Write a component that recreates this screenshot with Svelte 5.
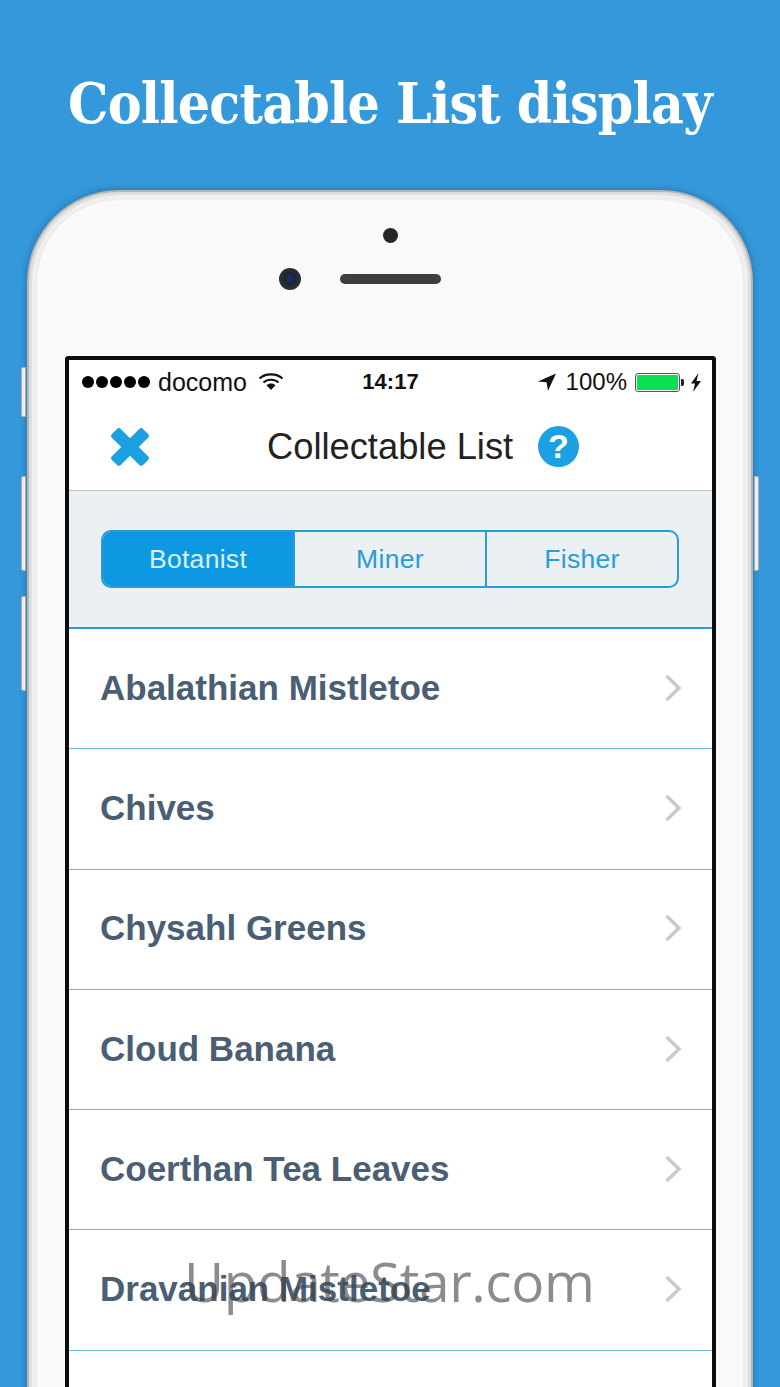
<script lang="ts">
  const tabs = ['Botanist', 'Miner', 'Fisher'];
  const items = [
    'Abalathian Mistletoe',
    'Chives',
    'Chysahl Greens',
    'Cloud Banana',
    'Coerthan Tea Leaves',
    'Dravanian Mistletoe',
    ''
  ];
  let active = 'Botanist';
</script>

<div class="page">
  <h1>Collectable List display</h1>

  <div class="phone">
    <span class="side-btn mute"></span>
    <span class="side-btn vol-up"></span>
    <span class="side-btn vol-down"></span>
    <span class="side-btn power"></span>

    <div class="bezel">
      <span class="sensor"></span>
      <div class="cam-row">
        <span class="camera"></span>
        <span class="speaker"></span>
      </div>
    </div>

    <div class="screen">
      <div class="status">
        <div class="status-left">
          <span class="dots"><i></i><i></i><i></i><i></i><i></i></span>
          <span class="carrier">docomo</span>
          <svg class="wifi" width="26" height="20" viewBox="0 0 26 20">
            <path d="M1.5 6.5C7.5 1 18.5 1 24.5 6.5" fill="none" stroke="#111" stroke-width="2.2"/>
            <path d="M5.5 10.5C9.5 6.8 16.5 6.8 20.5 10.5" fill="none" stroke="#111" stroke-width="2.2"/>
            <path d="M8.5 13.2L13 18l4.5-4.8C15 11 11 11 8.5 13.2z" fill="#111"/>
          </svg>
        </div>
        <span class="clock">14:17</span>
        <div class="status-right">
          <svg width="20" height="20" viewBox="0 0 20 20">
            <path d="M19 1.5L1 9.5l8.5.8 1.5 8.5z" fill="#111"/>
          </svg>
          <span class="pct">100%</span>
          <span class="battery"><b></b></span>
          <span class="nub"></span>
          <svg class="bolt" width="12" height="19" viewBox="0 0 12 19">
            <path d="M8.5 0L1 10.5h4L3 19l8-11H6.5z" fill="#111"/>
          </svg>
        </div>
      </div>

      <div class="nav">
        <svg class="close" width="40" height="40" viewBox="0 0 40 40">
          <g fill="#1ba1e2" transform="rotate(45 20 20)">
            <rect x="-2" y="13.75" width="44" height="12.5" rx="3"/>
            <rect x="13.75" y="-2" width="12.5" height="44" rx="3"/>
          </g>
        </svg>
        <span class="nav-title">Collectable List</span>
        <span class="help">?</span>
      </div>

      <div class="seg-wrap">
        <div class="seg">
          {#each tabs as tab}
            <button class:on={tab === active} on:click={() => (active = tab)}>{tab}</button>
          {/each}
        </div>
      </div>

      <ul>
        {#each items as item}
          <li>
            <span>{item}</span>
            <svg width="18" height="28" viewBox="0 0 18 28">
              <path d="M2.5 2L15 14 2.5 26" fill="none" stroke="#c9c9c9" stroke-width="3.4"/>
            </svg>
          </li>
        {/each}
      </ul>
    </div>
  </div>

  <div class="watermark">UpdateStar.com</div>
</div>

<style>
  :global(body) {
    margin: 0;
    background: #3498db;
  }

  .page {
    position: relative;
    width: 780px;
    height: 1387px;
    overflow: hidden;
    background: #3498db;
  }

  h1 {
    margin: 0;
    height: 190px;
    padding-top: 66px;
    box-sizing: border-box;
    text-align: center;
    color: #fff;
    font: 700 56.5px/74px "DejaVu Serif Condensed", "DejaVu Serif", serif;
    font-stretch: condensed;
    letter-spacing: -0.8px;
    white-space: nowrap;
  }

  .phone {
    position: relative;
    margin: 0 27px;
    height: 1300px;
    box-sizing: border-box;
    padding: 0 35px 0 36px;
    background: #f9f9f9;
    border-radius: 92px 92px 0 0;
    border: 2px solid #b4b5b7;
    border-bottom: 0;
    box-shadow:
      inset 0 0 2px 3px #dcdcdc,
      inset 0 0 2px 6px #f3f3f3,
      inset 0 0 2px 8px #e9e9e9,
      inset 0 0 3px 11px #fbfbfb,
      0 0 7px rgba(20, 50, 80, 0.4);
  }

  .side-btn {
    position: absolute;
    width: 5px;
    background: #eeeeee;
    border: 1px solid #b0b0b0;
    box-sizing: border-box;
  }
  .mute { left: -8px; top: 175px; height: 50px; border-radius: 2px 0 0 2px; }
  .vol-up { left: -8px; top: 284px; height: 95px; border-radius: 2px 0 0 2px; }
  .vol-down { left: -8px; top: 404px; height: 95px; border-radius: 2px 0 0 2px; }
  .power { right: -8px; top: 284px; height: 95px; border-radius: 0 2px 2px 0; }

  .bezel {
    position: relative;
    height: 164px;
  }
  .sensor {
    position: absolute;
    left: 318px;
    top: 36px;
    width: 15px;
    height: 15px;
    border-radius: 50%;
    background: #262626;
  }
  .cam-row {
    display: flex;
    align-items: center;
    gap: 39px;
    position: absolute;
    left: 214px;
    top: 76px;
  }
  .camera {
    width: 22px;
    height: 22px;
    border-radius: 50%;
    background: radial-gradient(circle at 50% 48%, #1a2a6a 0 3px, #20242c 5px, #3a3d42 100%);
  }
  .speaker {
    width: 101px;
    height: 10px;
    border-radius: 5px;
    background: #3e3e3e;
  }

  .screen {
    height: 1100px;
    background: #fff;
    border: 4px solid #0c0c0c;
    border-bottom: 0;
    border-radius: 4px 4px 0 0;
    font-family: "Liberation Sans", Arial, sans-serif;
  }

  .status {
    position: relative;
    display: flex;
    align-items: center;
    justify-content: space-between;
    height: 44px;
    padding: 0 10px 0 13px;
    color: #111;
    font-size: 24px;
  }
  .status-left, .status-right {
    display: flex;
    align-items: center;
  }
  .dots {
    display: flex;
    gap: 2px;
  }
  .dots i {
    width: 12px;
    height: 12px;
    border-radius: 50%;
    background: #000;
  }
  .carrier {
    margin-left: 8px;
    font-size: 25px;
  }
  .wifi {
    margin-left: 11px;
  }
  .clock {
    position: absolute;
    left: 0;
    right: 0;
    text-align: center;
    font-weight: 700;
    font-size: 22px;
  }
  .pct {
    margin-left: 9px;
  }
  .battery {
    margin-left: 8px;
    width: 45px;
    height: 19px;
    box-sizing: border-box;
    border: 1px solid #555;
    border-radius: 3px;
    padding: 1px;
    display: block;
  }
  .battery b {
    display: block;
    height: 100%;
    background: #0be050;
    border-radius: 1px;
  }
  .nub {
    width: 3px;
    height: 7px;
    background: #222;
    border-radius: 0 2px 2px 0;
    margin-left: 1px;
  }
  .bolt {
    margin-left: 6px;
  }

  .nav {
    position: relative;
    height: 87px;
    box-sizing: border-box;
    border-bottom: 1px solid #bcc4c6;
  }
  .close {
    position: absolute;
    left: 41px;
    top: 23px;
  }
  .nav-title {
    position: absolute;
    left: 198px;
    top: 20px;
    font-size: 36.3px;
    line-height: 46px;
    color: #222;
    white-space: nowrap;
  }
  .help {
    position: absolute;
    left: 469px;
    top: 22px;
    width: 41px;
    height: 41px;
    border-radius: 50%;
    background: #1ba1e2;
    color: #fff;
    font: 700 34px/41px "Liberation Sans", Arial, sans-serif;
    text-align: center;
  }

  .seg-wrap {
    height: 138px;
    box-sizing: border-box;
    padding: 39px 33px 0 32px;
    background: #ebf0f2;
    border-bottom: 2px solid #2a9bd8;
  }
  .seg {
    display: flex;
    height: 58px;
    box-sizing: border-box;
    border: 2px solid #2a9bd8;
    border-radius: 10px;
    overflow: hidden;
  }
  .seg button {
    flex: 1;
    padding: 0;
    border: 0;
    border-left: 2px solid #2a9bd8;
    background: transparent;
    color: #2a9bd8;
    font: 26.5px "Liberation Sans", Arial, sans-serif;
    letter-spacing: 0.3px;
  }
  .seg button:first-child {
    border-left: 0;
  }
  .seg button.on {
    background: #0d98e2;
    color: #d8f1fd;
  }

  ul {
    margin: 0;
    padding: 0;
    list-style: none;
  }
  li {
    display: flex;
    align-items: center;
    justify-content: space-between;
    height: 120.3px;
    box-sizing: border-box;
    padding: 0 30px 2px 31px;
    border-bottom: 1px solid #6cb9df;
    color: #4a5e74;
    font-size: 35px;
    font-weight: 700;
  }
  li:last-child {
    border-bottom: 0;
  }

  .watermark {
    position: absolute;
    left: 184px;
    top: 1243px;
    color: rgba(70, 70, 70, 0.62);
    font: 400 55px/76px "Open Sans", sans-serif;
    letter-spacing: -0.4px;
    white-space: nowrap;
  }
</style>
